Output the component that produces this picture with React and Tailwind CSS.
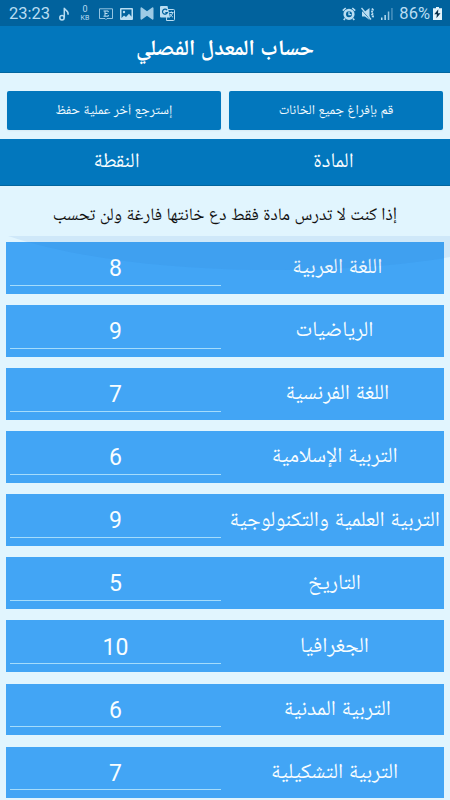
import React from 'react';

// some names carry a trailing space, which nudges them off centre
const subjects = [
  { name: 'اللغة العربية\u00a0', mark: 8 },
  { name: 'الرياضيات', mark: 9 },
  { name: 'اللغة الفرنسية\u00a0', mark: 7 },
  { name: 'التربية الإسلامية', mark: 6 },
  { name: 'التربية العلمية والتكنولوجية', mark: 9 },
  { name: 'التاريخ', mark: 5 },
  { name: 'الجغرافيا', mark: 10 },
  { name: 'التربية المدنية\u00a0', mark: 6 },
  { name: 'التربية التشكيلية', mark: 7 },
];

const StatusBar = () => (
  <div dir="ltr" className="flex h-[26px] shrink-0 items-center justify-between bg-[#01629d] pt-px text-[#b9ddf2]">
    <div className="flex items-center pl-[9px]">
      <span className="w-[50px] pt-0.5 text-[16.5px] leading-none">23:23</span>
      <svg className="h-[14px] w-3" viewBox="0 0 12 14" fill="none" stroke="currentColor" strokeWidth="1.5">
        <circle cx="3" cy="10.7" r="2.2" />
        <path d="M5.3 10.7V.8c.4 2.8 5 3 3.6 7" />
      </svg>
      <div className="ml-[9px] flex w-2.5 flex-col items-center gap-0.5 leading-none">
        <span className="text-[9px] leading-[8px]">0</span>
        <span className="text-[7px] leading-[7px]">KB</span>
      </div>
      <svg className="ml-[9px] h-3 w-[14px]" viewBox="0 0 14 12" fill="none" stroke="currentColor">
        <path d="M.5.8h13v9.7H8L7 11.5 6 10.5H.5z" strokeWidth=".8" />
        <path d="M4.500 3h4.700v1.200M6 3v5.200M4.500 8.200h4.800V7M6 5.500h2.500" />
      </svg>
      <svg className="ml-[7px] h-3 w-[13px]" viewBox="0 0 13 12" fill="currentColor">
        <path
          fillRule="evenodd"
          d="M1 0h11q1 0 1 1v10q0 1-1 1H1q-1 0-1-1V1q0-1 1-1zM1.500 1.500v8.500l2.500-2.500 2 1.500 3-3.300 2.500 3V1.500z"
        />
        <circle cx="4" cy="4" r="1.200" />
      </svg>
      <svg className="ml-[7px] h-[13px] w-[14px]" viewBox="0 0 14 13" fill="currentColor">
        <path d="M1.5.3 7 4.3 12.500.3q1 0 1 1v10.400q0 1-1 1L7 8.700l-5.500 4q-1 0-1-1V1.300q0-1 1-1z" opacity=".85" />
      </svg>
      <svg className="ml-[6px] h-[15px] w-[15px]" viewBox="0 0 15 15" fill="none" stroke="currentColor">
        <path d="M7 3.500h6.500q1 0 1 1v9q0 1-1 1H6.500z" />
        <path d="M1 0h6.500L10 11.500H1q-1 0-1-1V1q0-1 1-1z" fill="currentColor" stroke="none" />
        <path d="M7 4.200a2.500 2.500 0 1 0 .3 2.500H5.300" stroke="#01629d" strokeWidth="1.200" />
        <path d="M9.300 6.500h4.200M11.400 5.500v1M12.700 6.500c-.5 2-1.500 3.500-3 4.500M10 8c.7 1.500 1.800 2.500 3 3.200" />
      </svg>
    </div>
    <div className="flex items-center pr-2">
      <svg className="h-[14px] w-[14px]" viewBox="0 0 14 14" fill="none" stroke="currentColor">
        <circle cx="7" cy="7.300" r="4.300" strokeWidth="2.600" />
        <path d="M7 4.800v2.800h2.300" strokeWidth="1.300" />
        <path d="M.8 3.700 3.700 1M13.200 3.700 10.300 1M3 11.500l-1.300 1.600M11 11.500l1.300 1.600" strokeWidth="1.600" />
      </svg>
      <svg className="ml-[5px] h-[14px] w-[14px]" viewBox="0 0 14 14" fill="none" stroke="currentColor">
        <path d="M1 4.500h3L8.500 1v12L4 9.500H1z" fill="currentColor" stroke="none" />
        <path d="M0 2l9.500 11" stroke="#01629d" />
        <path d="M.5 1l9.500 11.500" strokeWidth="1.300" />
        <path d="M11 1.500l1 1.500-1 1.600 1 1.600-1 1.600 1 1.600-1 1.600" strokeWidth="1.800" strokeDasharray="2 .8" />
      </svg>
      <svg className="ml-[6px] h-[13px] w-3" viewBox="0 0 12 13" fill="currentColor">
        <path d="M0 10.500h1.500V13H0zM3.400 8h1.500v5H3.400z" />
        <path d="M6.800 4.500h1.500V13H6.800z" opacity=".8" />
        <path d="M10.200 1h1.500v12h-1.500z" opacity=".4" />
      </svg>
      <span className="ml-[6px] pt-0.5 text-[16.5px] leading-none">86%</span>
      <svg className="ml-[3px] h-[13px] w-[9px]" viewBox="0 0 9 13">
        <path d="M3 0h3v1.300h3V13H0V1.300h3z" fill="#e3f3fb" />
        <path d="M5.300 2.300 1.300 7.300h2.600L3.400 11.300l4.100-5H5z" fill="#0a2f49" />
      </svg>
    </div>
  </div>
);

const ActionButton = ({ children }) => (
  <button className="h-[39px] flex-1 rounded-xs bg-[#0277bd] pt-0.5 text-[13.6px] text-[#f2fbff] shadow-xs">
    {children}
  </button>
);

const SubjectRow = ({ name, mark }) => (
  <div className="flex h-[51.7px] shrink-0 bg-[#42a5f5] text-[#f8fdff]">
    <span className="flex w-[219px] items-center justify-center whitespace-nowrap pt-[3px] text-[21.5px]">{name}</span>
    <div className="flex flex-1 justify-center px-1 pb-2">
      <span className="flex w-full items-center justify-center border-b border-[#a5dcfb] pt-3 text-[23px]">{mark}</span>
    </div>
  </div>
);

const App = () => (
  <div
    dir="rtl"
    className="flex h-[800px] w-[450px] flex-col overflow-hidden bg-[#e1f5fe] font-['Roboto','Noto_Naskh_Arabic_UI','DejaVu_Sans',sans-serif]"
  >
    <StatusBar />
    <header className="flex h-[47px] shrink-0 items-center justify-center border-b border-[#02669f] bg-[#0277bd] pt-0.5 text-[22px] font-bold text-white">
      حساب المعدل الفصلي
    </header>
    <div className="flex gap-2 px-[7px] pt-[18px] pb-[9px]">
      <ActionButton>قم بإفراغ جميع الخانات</ActionButton>
      <ActionButton>إسترجع أخر عملية حفظ</ActionButton>
    </div>
    <div className="flex h-[47px] shrink-0 items-center border-b border-[#02669f] bg-[#0277bd] px-2 pt-1 text-[20.8px] text-[#f8fdff]">
      <span className="flex-1 text-center">المادة</span>
      <span className="flex-1 text-center">النقطة</span>
    </div>
    <p className="flex h-[56px] shrink-0 items-center justify-center whitespace-nowrap pt-1 text-[17.6px] text-[#111]">
      إذا كنت لا تدرس مادة فقط دع خانتها فارغة ولن تحسب
    </p>
    <div className="relative flex flex-col gap-[11.4px] px-1.5">
      {subjects.map((s) => (
        <SubjectRow key={s.name} name={s.name} mark={s.mark} />
      ))}
      {/* faint curved shade over the top of the list */}
      <svg className="pointer-events-none absolute -top-[6px] left-0 h-9 w-[450px]" viewBox="0 0 450 36">
        <path d="M8 0H450V21C400 30 340 34 270 34C180 34 80 24 8 0z" fill="#1e6ec8" fillOpacity=".09" />
      </svg>
    </div>
  </div>
);

export default App;
